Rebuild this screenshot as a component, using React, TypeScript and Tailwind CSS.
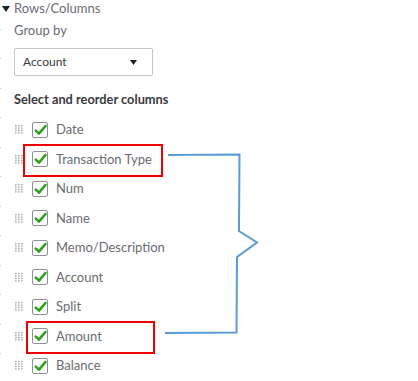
import React from "react";

const columns = [
  "Date",
  "Transaction Type",
  "Num",
  "Name",
  "Memo/Description",
  "Account",
  "Split",
  "Amount",
  "Balance",
];

function DragHandle() {
  return (
    <svg width="9" height="9" viewBox="0 0 9 9" className="shrink-0">
      {[0, 1, 2].map((c) =>
        [0, 1, 2, 3].map((r) => (
          <rect
            key={`${c}-${r}`}
            x={c * 3}
            y={r * 2.4}
            width="1.6"
            height="1.4"
            fill="#a8abb0"
          />
        )),
      )}
    </svg>
  );
}

function CheckBox() {
  return (
    <div className="w-4 h-4 shrink-0 rounded-[2px] border border-[#8d9096] bg-white flex items-center justify-center">
      <svg width="13" height="12" viewBox="0 0 13 12">
        <path
          d="M1.8 6.6 L5 9.6 L11.4 2"
          fill="none"
          stroke="#2ca01c"
          strokeWidth="2.6"
          strokeLinecap="round"
          strokeLinejoin="round"
        />
      </svg>
    </div>
  );
}

export default function App() {
  return (
    <div className="relative w-[418px] h-[381px] bg-white overflow-hidden font-['Lato',sans-serif] text-[#6b6c72]">
      {/* faint ruler ticks on left edge */}
      <div className="absolute left-0 top-0 flex flex-col">
        {Array.from({ length: 13 }).map((_, i) => (
          <div key={i} className="h-[29.5px] flex items-end">
            <div className="w-[1px] h-[1px] bg-[#c4c6ca]" />
          </div>
        ))}
      </div>

      <div className="flex flex-col pl-[14px] pt-[1px]">
        <div className="h-[15px] flex items-center -ml-[12px] gap-[4px] text-[13px] text-[#6b6c72]">
          <svg width="8" height="6" viewBox="0 0 8 6">
            <path d="M0 0 L8 0 L4 6 Z" fill="#222" />
          </svg>
          <span>Rows/Columns</span>
        </div>

        <div className="h-[16px] mt-[7px] flex items-center text-[13px]">
          Group by
        </div>

        <div className="mt-[9px] w-[139px] h-[28px] border border-[#c4c6ca] rounded-[2px] flex items-center justify-between pl-[8px] pr-[15px] text-[12px] text-[#393a3d]">
          <span>Account</span>
          <svg width="7" height="5" viewBox="0 0 7 5">
            <path d="M0 0 L7 0 L3.5 5 Z" fill="#222" />
          </svg>
        </div>

        <div className="h-[16px] mt-4 flex items-center text-[12.8px] font-bold text-[#393a3d]">
          Select and reorder columns
        </div>

        <div className="mt-[7px] flex flex-col">
          {columns.map((c) => (
            <div key={c} className="h-[29.5px] flex items-center">
              <div className="w-[18px] flex items-center pl-[1px]">
                <DragHandle />
              </div>
              <CheckBox />
              <span className="ml-[8px] text-[13px] text-[#6b6c72]">{c}</span>
            </div>
          ))}
        </div>
      </div>

      {/* annotation boxes */}
      <div className="absolute left-[23px] top-[144px] w-[140px] h-[33px] border-2 border-[#ee0000]" />
      <div className="absolute left-[26px] top-[321px] w-[129px] h-[33px] border-2 border-[#ee0000]" />

      {/* bracket */}
      <svg className="absolute left-0 top-0" width="418" height="381">
        <polyline
          points="168,155 239.5,154.5 239,231 257,242.5 237,257 236.5,332.5 165,333"
          fill="none"
          stroke="#5b9bd5"
          strokeWidth="2"
          strokeLinejoin="miter"
        />
      </svg>
    </div>
  );
}
